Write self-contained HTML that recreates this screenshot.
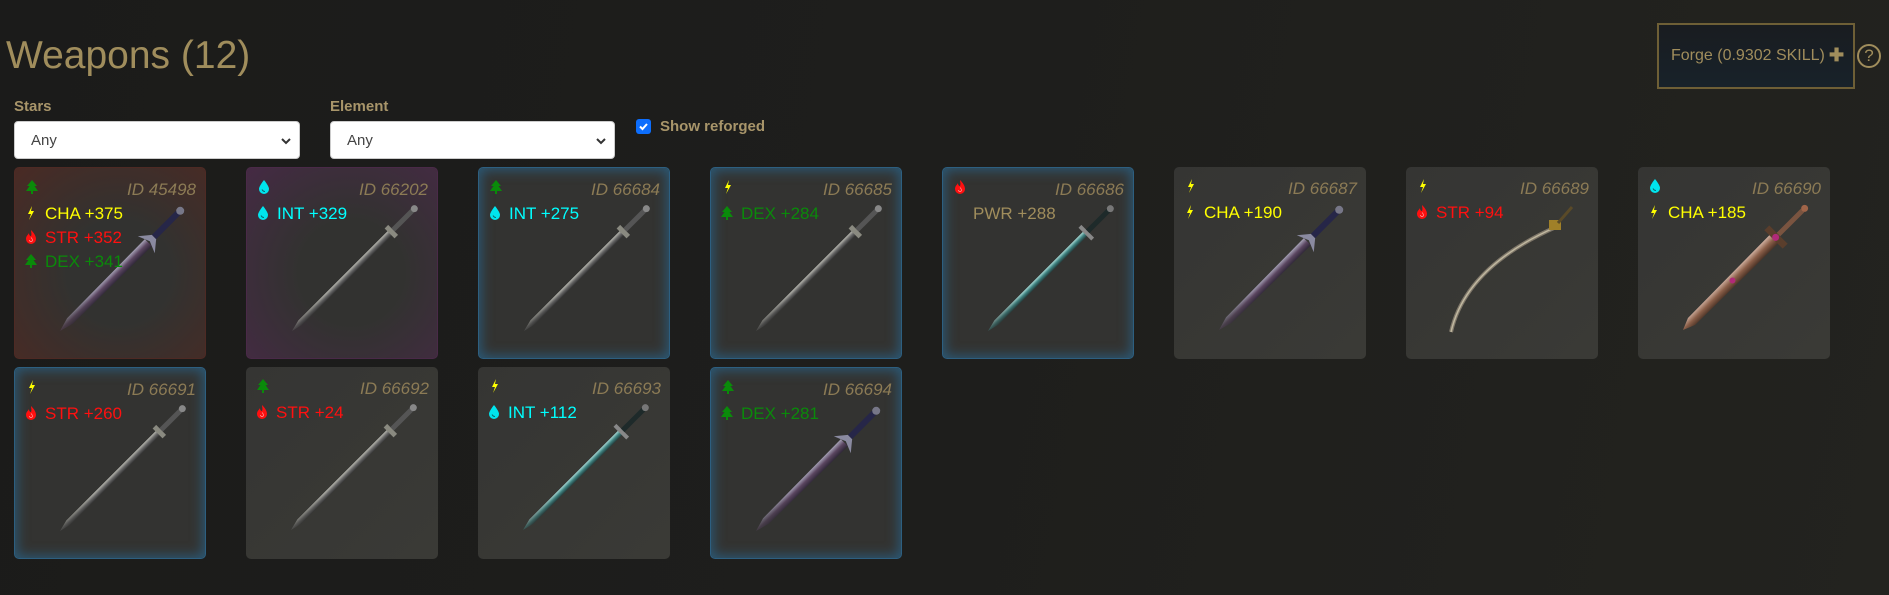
<!DOCTYPE html>
<html><head><meta charset="utf-8">
<style>
*{box-sizing:border-box;margin:0;padding:0}
body{width:1889px;height:595px;overflow:hidden;background:linear-gradient(100deg,#1b1b1a 0%,#1e1e1c 50%,#23231f 100%);font-family:"Liberation Sans",sans-serif;position:relative}
.title{position:absolute;left:6px;top:34px;font-size:39px;color:#a08d5c;font-weight:normal}
.lbl{position:absolute;top:98px;font-size:15px;font-weight:bold;color:#a8956a}
.sel{position:absolute;top:121px;height:38px;background:#fff;border:1px solid #ccc;border-radius:4px;font-size:15px;color:#444;padding:10px 0 0 16px}
.sel svg{position:absolute;right:8px;top:15px}
.chk{position:absolute;left:636px;top:119px;width:15px;height:15px;background:#0d6efd;border-radius:3px}
.rf{position:absolute;left:660px;top:118px;font-size:15px;font-weight:bold;color:#a8956a}
.forge{position:absolute;left:1657px;top:23px;width:198px;height:66px;border:2px solid #6e5f36;background:linear-gradient(#191c20,#18222a);color:#a08d5c;font-size:16px;padding:22px 0 0 12px;white-space:nowrap}
.forge b{font-size:18px;position:absolute;left:170px;top:20px}
.help{position:absolute;left:1857px;top:44px;width:24px;height:24px;border:2px solid #a08d5c;border-radius:50%;color:#a08d5c;font-size:17px;text-align:center;line-height:20px}
.card{position:absolute;width:192px;height:192px;border-radius:5px;background:#343432;overflow:hidden}
.g{background:linear-gradient(135deg,#353533,#3a3a36)}
.b{background:#333331;box-shadow:inset 0 0 12px 2px #2b5a78;border:1px solid #2d5f80}
.r{background:radial-gradient(ellipse at 55% 55%,#323230 35%,#4a2a24 100%);border:1px solid #4e2a24}
.p{background:radial-gradient(ellipse at 55% 55%,#323230 35%,#452a44 100%);border:1px solid #4a2a48}
.card .el{position:absolute;left:11px;top:12px}
.card .id{position:absolute;right:9px;top:12px;font-size:17px;font-style:italic;color:#8c7b55}
.card .st{position:absolute;left:10px;font-size:17px;white-space:nowrap}
.card .st svg{vertical-align:-1px;margin-right:8px}
.card .sw{position:absolute;left:0;top:0}
.Y{color:#ffff00}.R{color:#ff1010}.G{color:#0a8a0a}.C{color:#00ffff}.P{color:#a08d5c}
</style></head><body>
<svg width="0" height="0" style="position:absolute">
<defs>
<symbol id="tree" viewBox="0 0 12 14"><path d="M6 0L11 6H8.5L12 11H7V14H5V11H0L3.5 6H1Z" fill="#0a8a0a"/></symbol>
<symbol id="bolt" viewBox="0 0 12 14"><path d="M7 0L3 8H6L4 14L9 5H6Z" fill="#ffff00"/></symbol>
<symbol id="drop" viewBox="0 0 12 14"><path d="M6 0C6 0 1 6 1 9A5 5 0 0 0 11 9C11 6 6 0 6 0Z" fill="#00e5ee"/><path d="M4 9.5Q5 11.5 7 11.5" stroke="#0a6a70" fill="none"/></symbol>
<symbol id="fire" viewBox="0 0 12 14"><path d="M6 0C9 3 11 6 11 9A5 5 0 0 1 1 9C1 6 3 5 4 3C4 5 5 6 6 6C7 4 6 2 6 0Z" fill="#ff1010"/><path d="M4.5 10A1.5 1.5 0 0 0 7.5 10C7.5 9 6.5 8 6 7.5" stroke="#fff" fill="none" stroke-width=".7" opacity=".6"/></symbol>
<linearGradient id="bl" x1="0" y1="0" x2="0" y2="1"><stop offset="0" stop-color="#b8b8b0"/><stop offset=".5" stop-color="#666"/><stop offset="1" stop-color="#333"/></linearGradient>
<linearGradient id="tl" x1="0" y1="0" x2="0" y2="1"><stop offset="0" stop-color="#a8d8d4"/><stop offset=".5" stop-color="#3e8280"/><stop offset="1" stop-color="#243c3c"/></linearGradient>
<linearGradient id="pl" x1="0" y1="0" x2="0" y2="1"><stop offset="0" stop-color="#a8a4b8"/><stop offset=".5" stop-color="#5a4560"/><stop offset="1" stop-color="#302838"/></linearGradient>
<linearGradient id="cu" x1="0" y1="0" x2="0" y2="1"><stop offset="0" stop-color="#d0b0a0"/><stop offset=".5" stop-color="#8a5e48"/><stop offset="1" stop-color="#4a3226"/></linearGradient>
<linearGradient id="fd" x1="0" y1="0" x2="1" y2="0"><stop offset="0" stop-color="#fff" stop-opacity=".3"/><stop offset=".3" stop-color="#fff" stop-opacity="1"/></linearGradient>
<mask id="fm"><rect x="-10" y="-30" width="200" height="60" fill="url(#fd)"/></mask>
<symbol id="swS" viewBox="0 0 192 192"><g transform="translate(45,163) rotate(-45)" mask="url(#fm)"><path d="M0 0L12 -3L140 -3L140 3L12 3Z" fill="url(#bl)"/><rect x="138" y="-7" width="5" height="14" fill="#8a8a80"/><rect x="143" y="-2.5" width="28" height="5" fill="#555"/><circle cx="173" cy="0" r="3.5" fill="#888"/></g></symbol>
<symbol id="swT" viewBox="0 0 192 192"><g transform="translate(45,163) rotate(-45)" mask="url(#fm)"><path d="M0 0L12 -3L140 -3L140 3L12 3Z" fill="url(#tl)"/><rect x="137" y="-9" width="4" height="18" fill="#888"/><rect x="141" y="-2.5" width="30" height="5" fill="#1e2a2a"/><circle cx="173" cy="0" r="3.5" fill="#777"/></g></symbol>
<symbol id="swP" viewBox="0 0 192 192"><g transform="translate(45,163) rotate(-45)" mask="url(#fm)"><path d="M0 0L14 -4L125 -5L125 5L14 4Z" fill="url(#pl)"/><path d="M122 -12L133 -3L133 3L122 12L127 0Z" fill="#8a8aa0"/><rect x="133" y="-3" width="34" height="6" fill="#262648"/><circle cx="170" cy="0" r="4" fill="#778"/></g></symbol>
<symbol id="swC" viewBox="0 0 192 192"><g transform="translate(45,163) rotate(-45)"><path d="M0 0L12 -5L130 -6L130 6L12 5Z" fill="url(#cu)"/><rect x="128" y="-13" width="7" height="26" fill="#5a3e2c"/><circle cx="131" cy="0" r="3.5" fill="#b02a78"/><circle cx="70" cy="0" r="3" fill="#b02a78"/><rect x="135" y="-2.5" width="34" height="5" fill="#7a5440"/><circle cx="172" cy="0" r="3.5" fill="#a06448"/></g></symbol>
<symbol id="swK" viewBox="0 0 192 192"><path d="M45 165Q60 100 150 60" stroke="#80786a" stroke-width="4" fill="none"/><path d="M45 165Q60 100 150 60" stroke="#c0b8a0" stroke-width="1.5" fill="none"/><rect x="143" y="53" width="12" height="10" fill="#a08028"/><path d="M152 56L166 40" stroke="#5a4a28" stroke-width="3"/></symbol>
</defs></svg>

<div class="title">Weapons (12)</div>
<div class="lbl" style="left:14px">Stars</div>
<div class="lbl" style="left:330px">Element</div>
<div class="sel" style="left:14px;width:286px">Any<svg width="10" height="8"><path d="M1 2L5 6L9 2" stroke="#333" stroke-width="2" fill="none"/></svg></div>
<div class="sel" style="left:330px;width:285px">Any<svg width="10" height="8"><path d="M1 2L5 6L9 2" stroke="#333" stroke-width="2" fill="none"/></svg></div>
<div class="chk"><svg width="15" height="15"><path d="M4 7.5L6.5 10L11 5" stroke="#fff" stroke-width="2" fill="none"/></svg></div>
<div class="rf">Show reforged</div>
<div class="forge">Forge (0.9302 SKILL)<b>✚</b></div>
<div class="help">?</div>

<div class="card r" style="left:14px;top:167px"><svg class="sw" width="192" height="192"><use href="#swP"/></svg><svg class="el" width="12" height="14"><use href="#tree"/></svg><div class="id">ID 45498</div>
<div class="st Y" style="top:36px"><svg width="12" height="14"><use href="#bolt"/></svg>CHA +375</div>
<div class="st R" style="top:60px"><svg width="12" height="14"><use href="#fire"/></svg>STR +352</div>
<div class="st G" style="top:84px"><svg width="12" height="14"><use href="#tree"/></svg>DEX +341</div></div>

<div class="card p" style="left:246px;top:167px"><svg class="sw" width="192" height="192"><use href="#swS"/></svg><svg class="el" width="12" height="14"><use href="#drop"/></svg><div class="id">ID 66202</div>
<div class="st C" style="top:36px"><svg width="12" height="14"><use href="#drop"/></svg>INT +329</div></div>

<div class="card b" style="left:478px;top:167px"><svg class="sw" width="192" height="192"><use href="#swS"/></svg><svg class="el" width="12" height="14"><use href="#tree"/></svg><div class="id">ID 66684</div>
<div class="st C" style="top:36px"><svg width="12" height="14"><use href="#drop"/></svg>INT +275</div></div>

<div class="card b" style="left:710px;top:167px"><svg class="sw" width="192" height="192"><use href="#swS"/></svg><svg class="el" width="12" height="14"><use href="#bolt"/></svg><div class="id">ID 66685</div>
<div class="st G" style="top:36px"><svg width="12" height="14"><use href="#tree"/></svg>DEX +284</div></div>

<div class="card b" style="left:942px;top:167px"><svg class="sw" width="192" height="192"><use href="#swT"/></svg><svg class="el" width="12" height="14"><use href="#fire"/></svg><div class="id">ID 66686</div>
<div class="st P" style="top:36px;left:30px">PWR +288</div></div>

<div class="card g" style="left:1174px;top:167px"><svg class="sw" width="192" height="192"><use href="#swP"/></svg><svg class="el" width="12" height="14"><use href="#bolt"/></svg><div class="id">ID 66687</div>
<div class="st Y" style="top:36px"><svg width="12" height="14"><use href="#bolt"/></svg>CHA +190</div></div>

<div class="card g" style="left:1406px;top:167px"><svg class="sw" width="192" height="192"><use href="#swK"/></svg><svg class="el" width="12" height="14"><use href="#bolt"/></svg><div class="id">ID 66689</div>
<div class="st R" style="top:36px"><svg width="12" height="14"><use href="#fire"/></svg>STR +94</div></div>

<div class="card g" style="left:1638px;top:167px"><svg class="sw" width="192" height="192"><use href="#swC"/></svg><svg class="el" width="12" height="14"><use href="#drop"/></svg><div class="id">ID 66690</div>
<div class="st Y" style="top:36px"><svg width="12" height="14"><use href="#bolt"/></svg>CHA +185</div></div>

<div class="card b" style="left:14px;top:367px"><svg class="sw" width="192" height="192"><use href="#swS"/></svg><svg class="el" width="12" height="14"><use href="#bolt"/></svg><div class="id">ID 66691</div>
<div class="st R" style="top:36px"><svg width="12" height="14"><use href="#fire"/></svg>STR +260</div></div>

<div class="card g" style="left:246px;top:367px"><svg class="sw" width="192" height="192"><use href="#swS"/></svg><svg class="el" width="12" height="14"><use href="#tree"/></svg><div class="id">ID 66692</div>
<div class="st R" style="top:36px"><svg width="12" height="14"><use href="#fire"/></svg>STR +24</div></div>

<div class="card g" style="left:478px;top:367px"><svg class="sw" width="192" height="192"><use href="#swT"/></svg><svg class="el" width="12" height="14"><use href="#bolt"/></svg><div class="id">ID 66693</div>
<div class="st C" style="top:36px"><svg width="12" height="14"><use href="#drop"/></svg>INT +112</div></div>

<div class="card b" style="left:710px;top:367px"><svg class="sw" width="192" height="192"><use href="#swP"/></svg><svg class="el" width="12" height="14"><use href="#tree"/></svg><div class="id">ID 66694</div>
<div class="st G" style="top:36px"><svg width="12" height="14"><use href="#tree"/></svg>DEX +281</div></div>
</body></html>
